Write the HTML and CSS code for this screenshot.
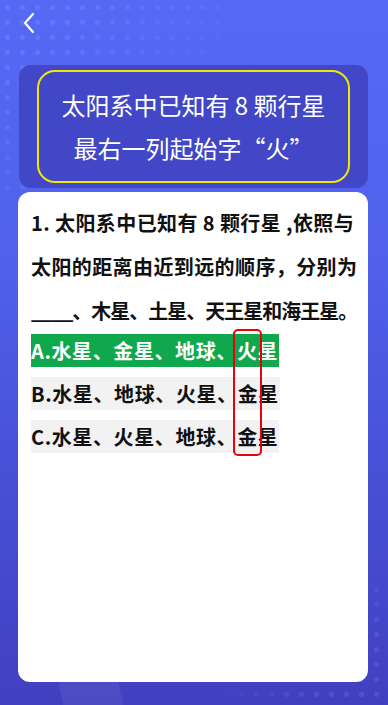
FILE: index.html
```html
<!DOCTYPE html>
<html lang="zh-CN">
<head>
<meta charset="utf-8">
<title>太阳系</title>
<link rel="stylesheet" href="styles.css">
</head>
<body>
<div class="page">
  <div class="dots dots-tl"></div>
  <div class="dots dots-br"></div>
  <div class="streak"></div>
  <header class="topbar">
    <svg class="back" width="14" height="22" viewBox="0 0 14 22">
      <polyline points="11,2 3,11 11,20" fill="none" stroke="#ffffff" stroke-width="2.2" stroke-linecap="round" stroke-linejoin="round"/>
    </svg>
  </header>
  <section class="panel">
    <div class="title">
      <div class="title-line">太阳系中已知有 8 颗行星</div>
      <div class="title-line">最右一列起始字“火”</div>
    </div>
  </section>
  <main class="card">
    <p class="question">1. 太阳系中已知有 8 颗行星 ,依照与<br>太阳的距离由近到远的顺序，分别为<br><span class="tight">____、木星、土星、天王星和海王星。</span></p>
    <div class="options">
      <div class="option correct">A.水星、金星、地球、火星</div>
      <div class="option">B.水星、地球、火星、金星</div>
      <div class="option">C.水星、火星、地球、金星</div>
    </div>
    <div class="highlight"></div>
  </main>
</div>
</body>
</html>
```
FILE: styles.css
```css
html, body {
  margin: 0;
  padding: 0;
}
body {
  font-family: "Noto Sans CJK SC", "Noto Sans", sans-serif;
}
.page {
  position: relative;
  width: 388px;
  height: 705px;
  overflow: hidden;
  background: linear-gradient(180deg, #5569f5 0%, #5062ec 35%, #4851d8 65%, #4140c0 100%);
  display: flex;
  flex-direction: column;
}
.dots {
  position: absolute;
  background-image: radial-gradient(circle, rgba(255,255,255,0.09) 2.2px, transparent 2.8px);
  background-size: 15px 15px;
  pointer-events: none;
}
.dots-tl {
  left: 0;
  top: 0;
  width: 230px;
  height: 200px;
  -webkit-mask-image: linear-gradient(135deg, #000 20%, transparent 75%);
  mask-image: linear-gradient(135deg, #000 20%, transparent 75%);
}
.dots-br {
  right: 0;
  bottom: 0;
  width: 160px;
  height: 120px;
  background-position: right 4px bottom 3px;
  -webkit-mask-image: linear-gradient(315deg, #000 25%, transparent 75%);
  mask-image: linear-gradient(315deg, #000 25%, transparent 75%);
}
.streak {
  position: absolute;
  left: 60px;
  top: 640px;
  width: 60px;
  height: 100px;
  background: rgba(255,255,255,0.06);
  transform: skewX(12deg);
}
.topbar {
  position: relative;
  height: 46px;
  display: flex;
  align-items: center;
  padding-left: 22px;
  box-sizing: border-box;
}
.back {
  display: block;
}
.panel {
  position: relative;
  margin: 19px 20px 0 19px;
  padding: 5px 0;
  background: #4147c6;
  border-radius: 12px;
  display: flex;
  justify-content: center;
}
.title {
  width: 313px;
  height: 113px;
  box-sizing: border-box;
  border: 2px solid #f2e600;
  border-radius: 18px;
  display: flex;
  flex-direction: column;
  align-items: center;
  justify-content: center;
  color: #ffffff;
  font-size: 24px;
  line-height: 43px;
  padding-bottom: 2px;
}
.title-line {
  white-space: nowrap;
}
.card {
  position: relative;
  margin: 4px 20px 0 18px;
  height: 490px;
  box-sizing: border-box;
  background: #ffffff;
  border-radius: 12px;
  padding: 9px 8px 0 13px;
}
.question {
  margin: 0;
  font-size: 20px;
  font-weight: bold;
  line-height: 44px;
  color: #111111;
  letter-spacing: 0.4px;
  white-space: nowrap;
}
.tight {
  letter-spacing: -1px;
}
.options {
  display: flex;
  flex-direction: column;
  align-items: flex-start;
  gap: 10px;
  margin-top: 1px;
}
.option {
  height: 33px;
  line-height: 33px;
  font-size: 20px;
  font-weight: bold;
  color: #111111;
  background: #f2f2f2;
  letter-spacing: 0.6px;
  white-space: nowrap;
  padding-right: 1px;
}
.option.correct {
  background: #0fa84c;
  color: #ffffff;
}
.highlight {
  position: absolute;
  left: 215px;
  top: 137px;
  width: 29px;
  height: 127px;
  box-sizing: border-box;
  border: 2.5px solid #e8000e;
  border-radius: 5px;
}
```
